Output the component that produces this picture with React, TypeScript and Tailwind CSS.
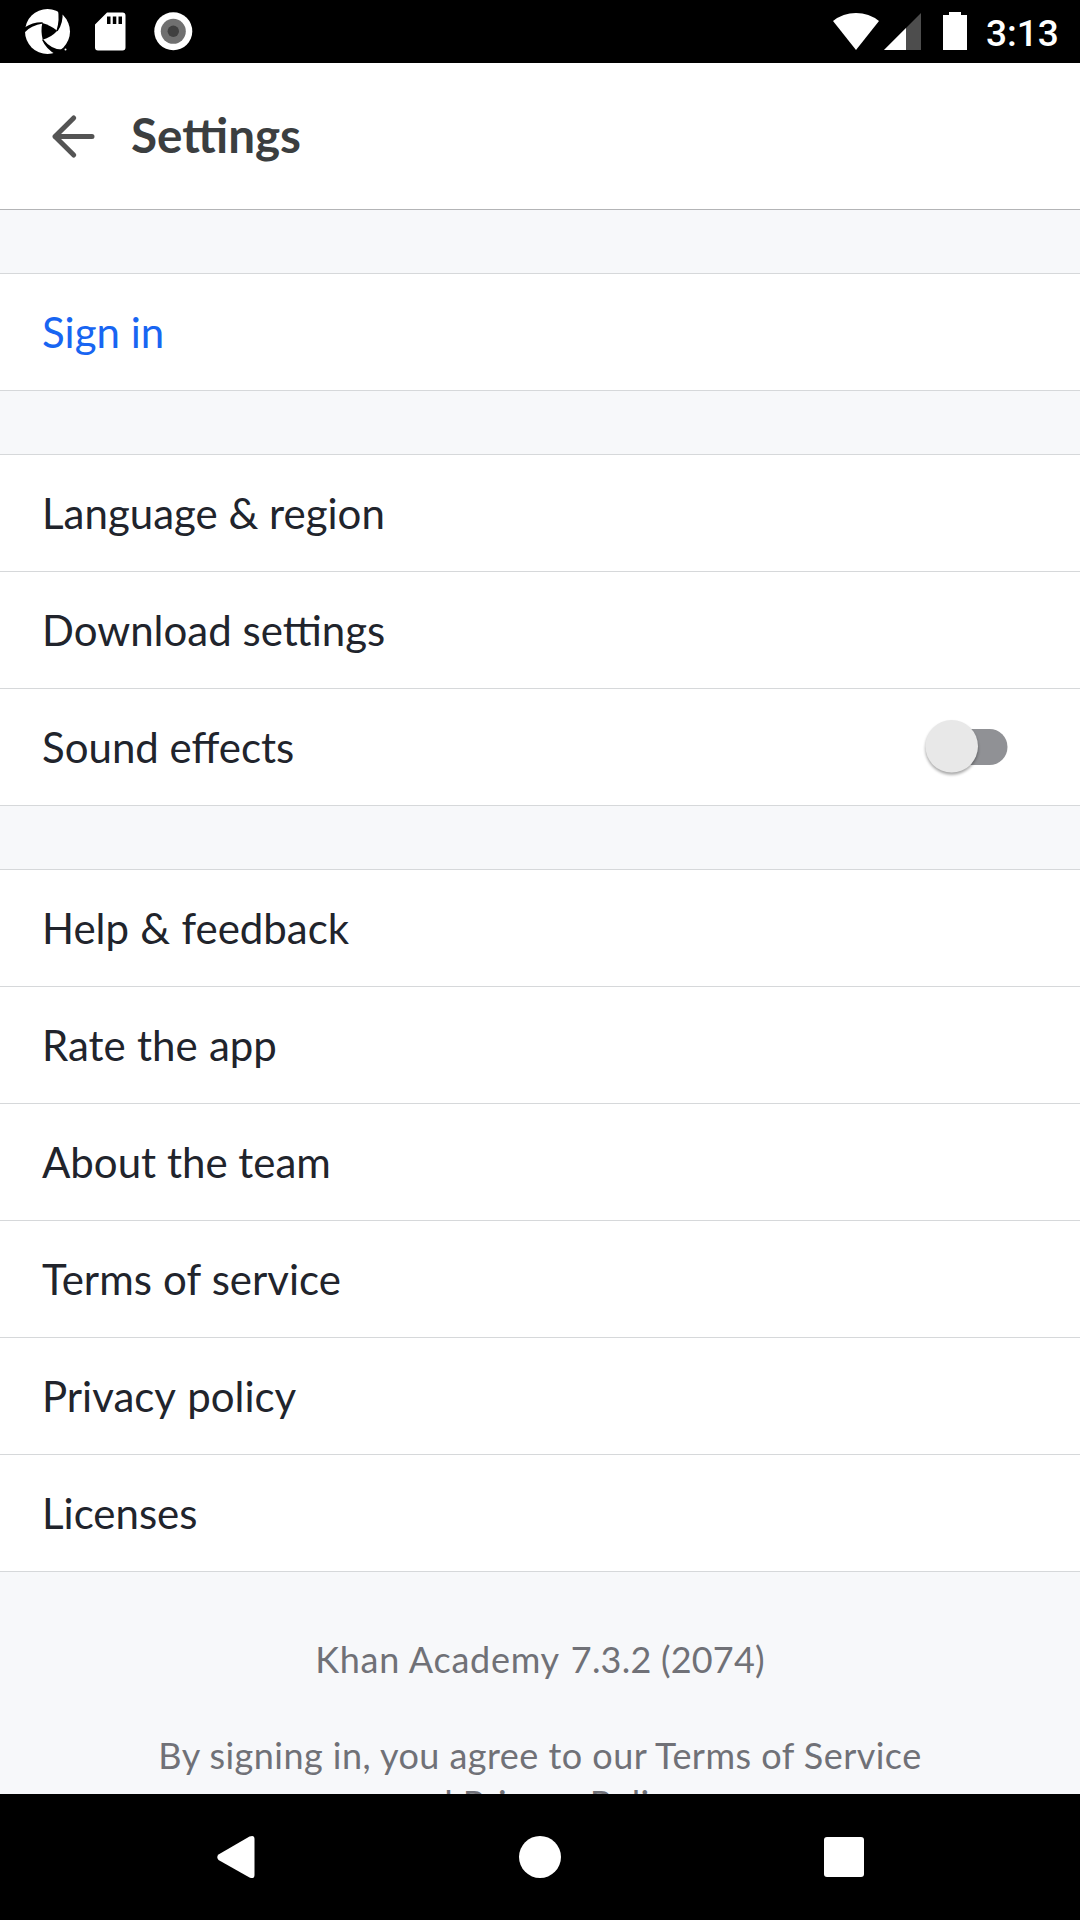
import React from "react";

type RowProps = { label: string; labelClass?: string; toggle?: boolean };

function Toggle() {
  return (
    <svg width="90" height="66" viewBox="922 714 90 66" className="shrink-0">
      <defs>
        <filter id="thumb-shadow" x="-20%" y="-20%" width="140%" height="150%">
          <feGaussianBlur stdDeviation="1.6" />
        </filter>
      </defs>
      <path d="M951 729h38.500a18 18 0 0 1 0 36H951z" fill="#909195" />
      <circle cx="951.700" cy="748.500" r="26.300" fill="#000" opacity=".35" filter="url(#thumb-shadow)" />
      <circle cx="951.700" cy="746.300" r="26.300" fill="#e8e8e8" />
    </svg>
  );
}

function Row({ label, labelClass = "text-[#21242c]", toggle }: RowProps) {
  return (
    <div className="flex h-[117px] items-center justify-between border-b border-[#d6d8da] bg-white pl-[42px] pr-[68px]">
      <span className={`text-[42px] leading-[50px] ${labelClass}`}>{label}</span>
      {toggle && <Toggle />}
    </div>
  );
}

function StatusBar() {
  return (
    <div className="flex h-[63px] shrink-0 items-center justify-between bg-black text-white">
      <svg width="220" height="63" viewBox="0 0 220 63">
        <circle cx="47.500" cy="31.500" r="22.500" fill="#fff" />
        <g fill="#000">
          <path d="M42.300 23Q50 25 57.300 30.700Q51 37.500 42.700 39.700Q40.500 31 42.300 23Z" />
          <path d="M24 33Q31 25 43 23.500L42.500 22.300Q33 22 24.500 27.500Z" />
          <path d="M57.600 8Q60 20 56.500 30.500L57.600 31.200Q63.500 23 62.500 12Z" />
          <path d="M42 39.700Q46 49 56 54.500L64 49.500Q52 50.500 43.300 39.500Z" />
        </g>
        <circle cx="65.500" cy="49.500" r="1" fill="#fff" />
        <path d="M107 12.500h15.500a3 3 0 0 1 3 3v32a3 3 0 0 1-3 3h-24.500a3 3 0 0 1-3-3V24.500z" fill="#fff" />
        <path d="M107 16.500h3.500v7.500H107zM112.800 16.500h3.500v7.500h-3.500zM118.500 16.500h3.500v7.500h-3.500z" fill="#000" />
        <circle cx="173.300" cy="31.300" r="19" fill="#fff" />
        <circle cx="173.300" cy="31.300" r="12.500" fill="#707070" />
        <circle cx="173.300" cy="31.300" r="5.700" fill="#404040" />
      </svg>
      <div className="flex items-center">
        <svg width="150" height="63" viewBox="820 0 150 63">
          <path d="M856 50L833 21Q843 13 856 13T879 21Z" fill="#fff" />
          <path d="M884 50L921 13V50Z" fill="#4d4d4d" />
          <path d="M884 50L906 28V50Z" fill="#fff" />
          <path d="M943 15h6v-3h12v3h6v35h-24z" fill="#fff" />
        </svg>
        <span className="w-[110px] pl-[16px] pt-[4px] font-['Roboto',sans-serif] text-[37px] leading-[44px] font-medium">3:13</span>
      </div>
    </div>
  );
}

export default function App() {
  return (
    <div className="flex h-[1920px] w-[1080px] flex-col overflow-hidden bg-[#f7f8fa] font-['Lato',sans-serif]">
      <StatusBar />
      <header className="flex h-[147px] shrink-0 items-center border-b border-[#b3b4b6] bg-white pl-[51px]">
        <svg width="45" height="45" viewBox="51 114 45 45" fill="none" stroke="#545454" strokeWidth="5" strokeLinecap="round" strokeLinejoin="round">
          <path d="M92 136.500H55M73.700 118L55 136.500L73.700 155" />
        </svg>
        <h1 className="pb-[2px] pl-[35px] text-[47.600px] leading-[58px] font-bold text-[#3b3e40]">Settings</h1>
      </header>
      <main className="min-h-0 flex-1 overflow-hidden">
        <section className="mt-[63px] border-t border-[#d6d8da]">
          <Row label="Sign in" labelClass="text-[#1865f2]" />
        </section>
        <section className="mt-[63px] border-t border-[#d6d8da]">
          <Row label="Language & region" />
          <Row label="Download settings" />
          <Row label="Sound effects" toggle />
        </section>
        <section className="mt-[63px] border-t border-[#d6d8da]">
          <Row label="Help & feedback" labelClass="text-[#21242c] [word-spacing:0.5px]" />
          <Row label="Rate the app" labelClass="text-[#21242c] [word-spacing:0.5px]" />
          <Row label="About the team" />
          <Row label="Terms of service" labelClass="text-[#21242c] [word-spacing:0.5px]" />
          <Row label="Privacy policy" labelClass="text-[#21242c] [word-spacing:1.5px]" />
          <Row label="Licenses" />
        </section>
        <div className="pt-[63px] text-center text-[36px] leading-[48px] tracking-[0.46px] text-[#707177]">
          <p className="tracking-[0.2px]"><span className="tracking-[0.75px]">Khan Academy</span> <span className="pl-[1.500px]">7.3.2 (2074)</span></p>
          <p className="mt-[48px]">By signing in, you agree to our Terms of Service<br />and Privacy Policy</p>
        </div>
      </main>
      <nav className="flex h-[126px] shrink-0 items-center justify-around bg-black">
        <svg width="1080" height="126" viewBox="0 1794 1080 126" fill="#fff">
          <path d="M218.500 1854.500L249.500 1836.500Q254.500 1834.500 254.500 1839V1875Q254.500 1879.500 249.500 1877.500L218.500 1860Q216 1857 218.500 1854.500Z" />
          <circle cx="540" cy="1857" r="21" />
          <rect x="824" y="1837" width="40" height="40" rx="3" />
        </svg>
      </nav>
    </div>
  );
}
